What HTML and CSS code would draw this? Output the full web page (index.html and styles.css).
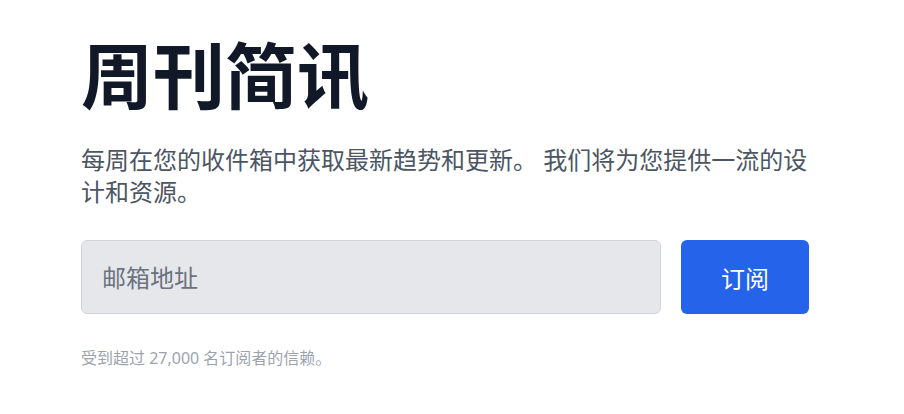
FILE: index.html
```html
<!DOCTYPE html>
<html lang="zh-CN">
<head>
<meta charset="utf-8">
<link rel="stylesheet" href="styles.css">
</head>
<body>
<main class="wrap">
  <h1 class="title">周刊简讯</h1>
  <p class="lead">每周在您的收件箱中获取最新趋势和更新。 我们将为您提供一流的设计和资源。</p>
  <form class="form">
    <input class="email" type="email" placeholder="邮箱地址">
    <button class="btn" type="button">订阅</button>
  </form>
  <p class="note">受到超过 27,000 名订阅者的信赖。</p>
</main>
</body>
</html>
```

FILE: styles.css
```css
* { box-sizing: border-box; }
body {
  margin: 0;
  background: #ffffff;
  font-family: "Noto Sans", "Noto Sans CJK SC", sans-serif;
}
.wrap {
  width: 728px;
  margin-left: 81px;
  padding-top: 36px;
}
.title {
  margin: 0;
  font-family: "Noto Sans CJK SC", sans-serif;
  font-size: 72px;
  line-height: 1;
  font-weight: 700;
  color: #111827;
}
.lead {
  margin: 36px 0 0;
  font-size: 24px;
  line-height: 32px;
  color: #4b5563;
}
.form {
  display: flex;
  gap: 20px;
  margin-top: 32px;
}
.email {
  flex: 1;
  height: 74px;
  padding: 0 20px;
  border: 1px solid #d1d5db;
  border-radius: 6px;
  background: #e5e7eb;
  font-family: inherit;
  font-size: 24px;
  color: #111827;
}
.email::placeholder { color: #6b7280; }
.btn {
  width: 128px;
  height: 74px;
  border: 0;
  border-radius: 6px;
  background: #2563eb;
  color: #ffffff;
  font-family: inherit;
  font-size: 24px;
}
.note {
  margin: 34px 0 0;
  font-size: 16px;
  line-height: 20px;
  color: #9ca3af;
}
```
